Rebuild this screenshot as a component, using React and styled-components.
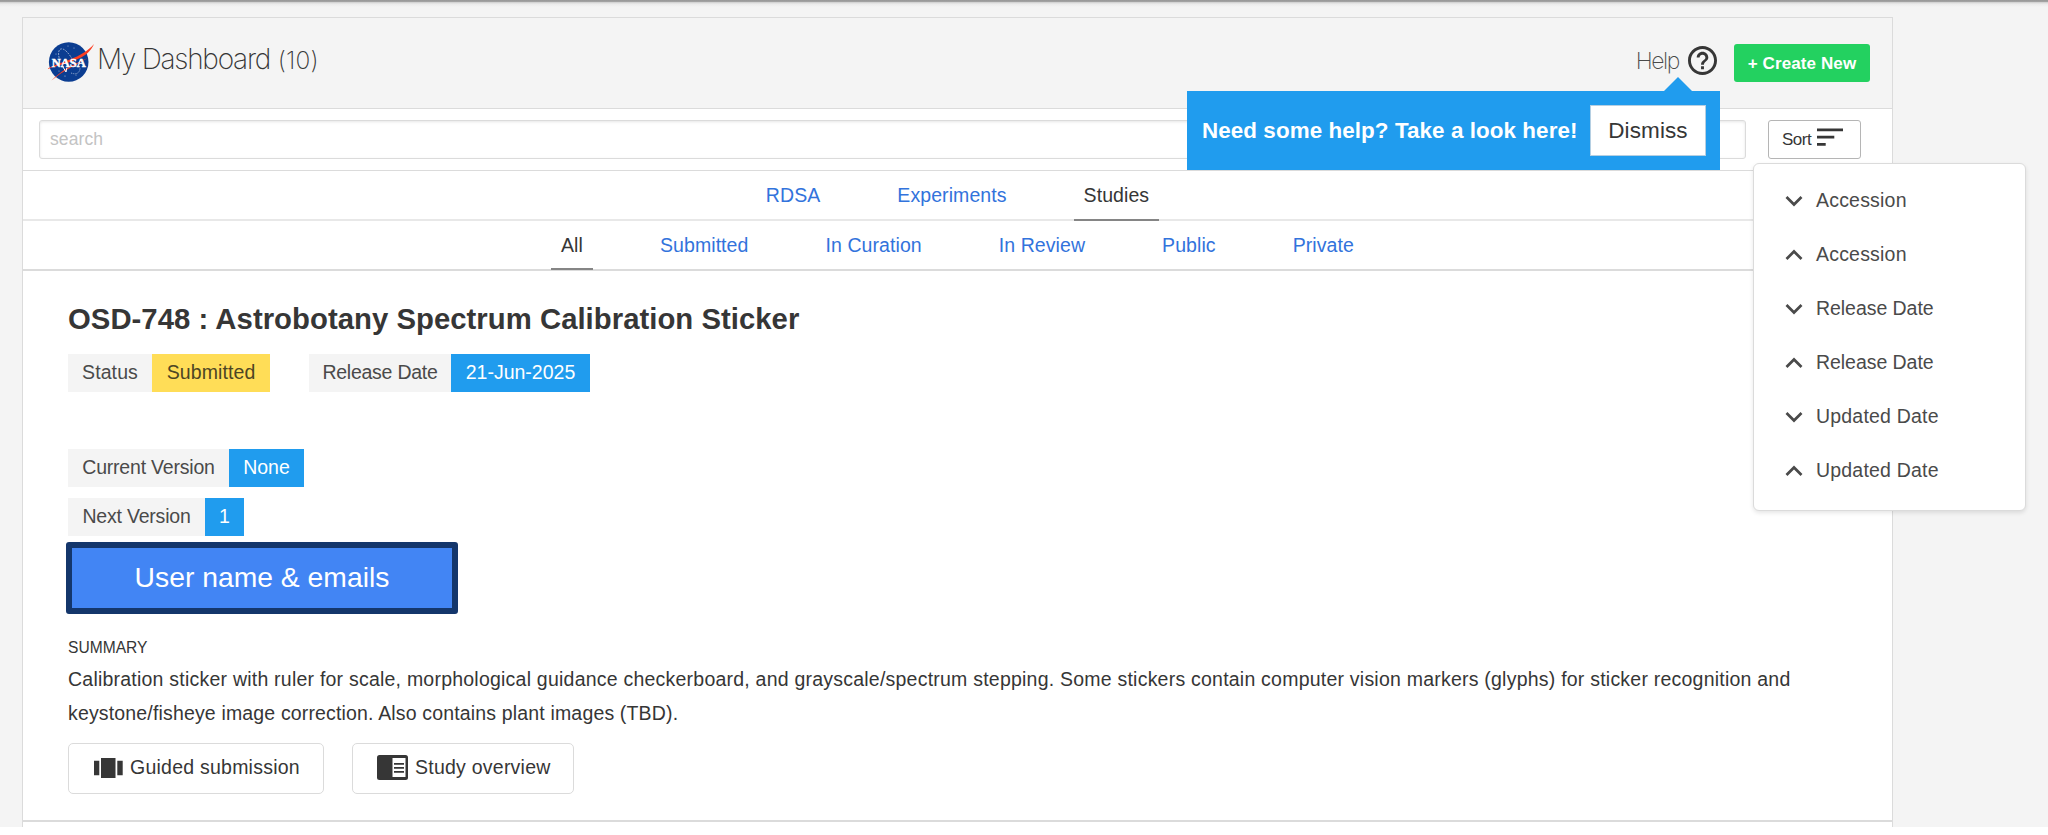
import React from "react";
import styled, { createGlobalStyle } from "styled-components";

const Global = createGlobalStyle`
  *, *::before, *::after { box-sizing: border-box; }
  html, body { margin: 0; padding: 0; background: #fff; }
  body {
    height: 835px;
    overflow: hidden;
    font-family: "Liberation Sans", Arial, sans-serif;
    font-size: 19.5px;
    color: #363636;
  }
  button, input { font-family: inherit; color: inherit; margin: 0; }
`;

const Page = styled.div`
  height: 827px;
  overflow: hidden;
  background: linear-gradient(#979797 0, #a2a2a2 1.5px, #d4d4d4 2.5px, #ebebeb 4px, #f4f4f4 7px);
  padding: 17px 0 0 22px;
`;

const Panel = styled.main`
  width: 1871px;
  height: 818px;
  border: 1px solid #dbdbdb;
  border-bottom: 0;
  background: #fff;
`;

const Header = styled.header`
  display: flex;
  align-items: flex-start;
  justify-content: space-between;
  height: 91px;
  padding: 23px 22px 0 24px;
  background: #f4f4f4;
  border-bottom: 1px solid #dbdbdb;
`;

const Brand = styled.div`
  display: flex;
  align-items: flex-start;
`;

const Title = styled.h1`
  margin: 0 0 0 2px;
  font-family: Inter, sans-serif;
  font-size: 28px;
  font-weight: 200;
  line-height: 36px;
  letter-spacing: -1.25px;
  color: #363636;
`;

const Count = styled.span`
  font-size: 24.5px;
  letter-spacing: 0.2px;
  margin-left: 1px;
`;

const HeaderActions = styled.div`
  display: flex;
  align-items: flex-start;
`;

const HelpLink = styled.a`
  position: relative;
  display: flex;
  align-items: flex-start;
  margin-right: 17px;
  font-family: Inter, sans-serif;
  font-size: 23px;
  font-weight: 200;
  line-height: 40px;
  letter-spacing: -1.4px;
  color: #4a4a4a;
  svg { display: block; margin: 5px 0 0 9px; }
`;

const CreateButton = styled.button`
  width: 136px;
  height: 38px;
  margin-top: 3px;
  padding: 1px 0 0;
  border: 0;
  border-radius: 3px;
  background: #23d160;
  color: #fff;
  font-size: 17px;
  font-weight: 700;
  line-height: 38px;
  letter-spacing: 0.1px;
`;

const HelpBubble = styled.div`
  position: absolute;
  z-index: 3;
  top: 50px;
  right: -3px;
  display: flex;
  align-items: center;
  justify-content: space-between;
  width: 533px;
  height: 79px;
  padding: 0 14px 0 15px;
  background: #209cee;
  color: #fff;
  font-family: "Liberation Sans", Arial, sans-serif;
  font-size: 22.4px;
  font-weight: 700;
  letter-spacing: 0.08px;
  line-height: 30px;
  white-space: nowrap;
  &::before {
    content: "";
    position: absolute;
    top: -14px;
    right: 28px;
    border: 14px solid transparent;
    border-top: 0;
    border-bottom-color: #209cee;
  }
`;

const DismissButton = styled.button`
  width: 116px;
  height: 51px;
  padding: 0;
  border: 1px solid #b5cfe2;
  background: #fff;
  color: #363636;
  font-size: 22.5px;
  line-height: 48px;
  letter-spacing: 0.1px;
`;

const SearchRow = styled.div`
  display: flex;
  justify-content: space-between;
  height: 62px;
  padding: 11px 31px 0 16px;
  border-bottom: 1px solid #dbdbdb;
`;

const SearchInput = styled.input`
  width: 1707px;
  height: 39px;
  padding: 0 10px;
  border: 1.5px solid #dbdbdb;
  border-radius: 3px;
  background: #fff;
  box-shadow: inset 0 1px 3px rgba(10, 10, 10, 0.1);
  font-size: 17.5px;
  letter-spacing: 0.1px;
  outline: 0;
  &::placeholder { color: #c3c3c3; opacity: 1; }
`;

const SortButton = styled.button`
  display: flex;
  align-items: flex-start;
  width: 93px;
  height: 39px;
  padding: 0 0 0 13px;
  border: 1px solid #b5b5b5;
  border-radius: 3px;
  background: #fff;
  font-size: 17px;
  line-height: 37px;
  letter-spacing: -0.5px;
  svg { display: block; margin: 7px 0 0 6px; }
`;

const SortArea = styled.div`
  position: relative;
`;

const SortMenu = styled.div`
  position: absolute;
  z-index: 2;
  top: 43px;
  left: -15px;
  width: 273px;
  height: 348px;
  padding: 10px 0;
  border: 1px solid #dbdbdb;
  border-radius: 6px;
  background: #fff;
  box-shadow: 0 2px 4px rgba(10, 10, 10, 0.1);
`;

const SortItem = styled.div`
  display: flex;
  align-items: center;
  height: 53.9px;
  padding-left: 31px;
  letter-spacing: ${(p) => p.$track}px;
  color: #4a4a4a;
  svg { display: block; margin: 1px 13px 0 0; }
`;

const Tabs = styled.nav`
  display: flex;
  justify-content: center;
  gap: 57px;
  height: ${(p) => p.$height}px;
  border-bottom: 2px solid ${(p) => p.$line};
`;

const Tab = styled.a`
  height: ${(p) => p.$height}px;
  padding: 0 10px;
  border-bottom: 2px solid ${(p) => (p.$active ? "#858585" : "transparent")};
  color: ${(p) => (p.$active ? "#363636" : "#3273dc")};
  line-height: 48px;
  letter-spacing: 0.08px;
`;

const Study = styled.article`
  height: 551px;
  padding: 28px 45px 0;
  border-bottom: 2px solid #dbdbdb;
`;

const StudyTitle = styled.h2`
  margin: 0 0 15px;
  font-size: 29.3px;
  font-weight: 700;
  line-height: 40px;
  letter-spacing: 0.03px;
  color: #363636;
`;

const TagRow = styled.div`
  display: flex;
  gap: 39px;
  margin-bottom: ${(p) => p.$after}px;
`;

const Tag = styled.div`
  display: flex;
  height: 38px;
  line-height: 37px;
`;

const tones = {
  plain: ["#f4f4f4", "#4a4a4a"],
  warning: ["#ffdd57", "#4d4524"],
  info: ["#209cee", "#ffffff"],
};

const TagPart = styled.span`
  width: ${(p) => p.$width}px;
  text-align: center;
  letter-spacing: ${(p) => p.$track || 0}px;
  background: ${(p) => tones[p.$tone][0]};
  color: ${(p) => tones[p.$tone][1]};
  white-space: nowrap;
`;

const UserBox = styled.div`
  width: 392px;
  height: 72px;
  margin: 0 0 22px -2px;
  border: 6px solid #14366b;
  border-radius: 3px;
  background: #4285f4;
  color: #fff;
  font-size: 28.3px;
  line-height: 59px;
  text-align: center;
`;

const SummaryLabel = styled.div`
  margin-bottom: 3px;
  font-size: 15.6px;
  line-height: 24px;
`;

const Summary = styled.p`
  margin: 0 0 12.5px;
  line-height: 33.5px;
  white-space: nowrap;
`;

const SummaryLine = styled.span`
  display: block;
  letter-spacing: ${(p) => p.$track}px;
`;

const StudyActions = styled.div`
  display: flex;
  gap: 28px;
`;

const ActionButton = styled.button`
  display: flex;
  align-items: center;
  width: ${(p) => p.$width}px;
  height: 51px;
  padding: 0 0 1px ${(p) => p.$inset}px;
  border: 1px solid #dbdbdb;
  border-radius: 5px;
  background: #fff;
  font-size: 19.5px;
  letter-spacing: 0.24px;
  white-space: nowrap;
  svg { display: block; margin-right: 7px; }
`;

const Logo = () => (
  <svg width="48" height="42" viewBox="0 0 48 42">
    <circle cx="21.7" cy="21" r="19.8" fill="#0b3d91" />
    <g fill="none" stroke="#fff" strokeWidth="0.7" opacity="0.75">
      <path d="M13 20C10 11 12 7 16 8c5 2 11 12 13 18" strokeDasharray="2 1" />
      <path d="M24 32c5 2 9 0 9-5" strokeDasharray="1.2 1" />
    </g>
    <g fill="#fff" opacity="0.7">
      <circle cx="21" cy="5" r="0.5" /><circle cx="27" cy="7" r="0.5" />
      <circle cx="9" cy="13" r="0.5" /><circle cx="12" cy="30" r="0.5" />
      <circle cx="18" cy="35" r="0.6" /><circle cx="29" cy="34" r="0.5" />
    </g>
    <path d="M0 28C14 20 34 18 47 3C41 17 27 20 0 28Z" fill="#fc3d21" />
    <path d="M4.500 39.500C14 30 24 24 41 17C27 25 16 30 4.500 39.500Z" fill="#fc3d21" />
    <text x="4.800" y="25.600" textLength="34" lengthAdjust="spacingAndGlyphs" fill="#fff" stroke="#fff" strokeWidth="0.4" fontFamily="Liberation Serif" fontWeight="700" fontSize="11.500">NASA</text>
    <path d="M16 26l3 5 .8-4" fill="none" stroke="#fff" strokeWidth="1" />
  </svg>
);

const HelpIcon = () => (
  <svg width="29" height="29" viewBox="2 2 20 20" fill="#363636">
    <path d="M11 18h2v-2h-2v2zm1-16C6.480 2 2 6.480 2 12s4.480 10 10 10 10-4.480 10-10S17.520 2 12 2zm0 18c-4.410 0-8-3.590-8-8s3.590-8 8-8 8 3.590 8 8-3.590 8-8 8zm0-14c-2.210 0-4 1.790-4 4h2c0-1.100.9-2 2-2s2 .9 2 2c0 2-3 1.750-3 5h2c0-2.250 3-2.500 3-5 0-2.210-1.790-4-4-4z" />
  </svg>
);

const SortIcon = () => (
  <svg width="26" height="18" viewBox="0 0 26 18" fill="#363636">
    <path d="M0 0.500h26v2.700H0zM0 7.700h17.300v2.700H0zM0 15h8.700v2.700H0z" />
  </svg>
);

const Chevron = ({ up }) => (
  <svg width="18" height="12" viewBox="0 0 18 12" fill="none" stroke="#4a4a4a" strokeWidth="2.700">
    <path d={up ? "M1.500 10L9 2.500L16.500 10" : "M1.500 2L9 9.500L16.500 2"} />
  </svg>
);

const CarouselIcon = () => (
  <svg width="29" height="20" viewBox="0 0 29 20" fill="#363636">
    <path d="M7 0h14.500v20H7zM0 2.800h5.300v14.400H0zM23.300 2.800h5.400v14.400h-5.400z" />
  </svg>
);

const ReaderIcon = () => (
  <svg width="31" height="25" viewBox="0 0 31 25">
    <rect width="31" height="25" rx="2.500" fill="#363636" />
    <path d="M15.500 3H28.500V22H15.500z" fill="#fff" />
    <path d="M17 8h10v1.700H17zM17 12h10v1.700H17zM17 16h10v1.700H17z" fill="#363636" />
  </svg>
);

const sortOptions = [
  { label: "Accession", track: 0.2 },
  { label: "Release Date", track: -0.05 },
  { label: "Updated Date", track: 0.2 },
].flatMap((option) => [
  { ...option, up: false },
  { ...option, up: true },
]);
const kinds = ["RDSA", "Experiments", "Studies"];
const stages = ["All", "Submitted", "In Curation", "In Review", "Public", "Private"];

export default function App() {
  return (
    <Page>
      <Global />
      <Panel>
        <Header>
          <Brand>
            <Logo />
            <Title>My Dashboard <Count>(10)</Count></Title>
          </Brand>
          <HeaderActions>
            <HelpLink>
              Help
              <HelpIcon />
              <HelpBubble>
                <span>Need some help? Take a look here!</span>
                <DismissButton>Dismiss</DismissButton>
              </HelpBubble>
            </HelpLink>
            <CreateButton>+ Create New</CreateButton>
          </HeaderActions>
        </Header>
        <SearchRow>
          <SearchInput placeholder="search" />
          <SortArea>
            <SortButton>Sort<SortIcon /></SortButton>
            <SortMenu>
              {sortOptions.map(({ label, up, track }) => (
                <SortItem key={label + up} $track={track}><Chevron up={up} />{label}</SortItem>
              ))}
            </SortMenu>
          </SortArea>
        </SearchRow>
        <Tabs $height={50} $line="#e8e8e8">
          {kinds.map((k) => <Tab key={k} $height={50} $active={k === "Studies"}>{k}</Tab>)}
        </Tabs>
        <Tabs $height={50} $line="#dbdbdb">
          {stages.map((s) => <Tab key={s} $height={49} $active={s === "All"}>{s}</Tab>)}
        </Tabs>
        <Study>
          <StudyTitle>OSD-748 : Astrobotany Spectrum Calibration Sticker</StudyTitle>
          <TagRow $after={57}>
            <Tag><TagPart $tone="plain" $width={84} $track={0.1}>Status</TagPart><TagPart $tone="warning" $width={118} $track={0.1}>Submitted</TagPart></Tag>
            <Tag><TagPart $tone="plain" $width={142} $track={-0.25}>Release Date</TagPart><TagPart $tone="info" $width={139}>21-Jun-2025</TagPart></Tag>
          </TagRow>
          <TagRow $after={11}>
            <Tag><TagPart $tone="plain" $width={161} $track={-0.2}>Current Version</TagPart><TagPart $tone="info" $width={75}>None</TagPart></Tag>
          </TagRow>
          <TagRow $after={6}>
            <Tag><TagPart $tone="plain" $width={137} $track={-0.2}>Next Version</TagPart><TagPart $tone="info" $width={39}>1</TagPart></Tag>
          </TagRow>
          <UserBox>User name &amp; emails</UserBox>
          <SummaryLabel>SUMMARY</SummaryLabel>
          <Summary>
            <SummaryLine $track={0.225}>Calibration sticker with ruler for scale, morphological guidance checkerboard, and grayscale/spectrum stepping. Some stickers contain computer vision markers (glyphs) for sticker recognition and</SummaryLine>
            <SummaryLine $track={0.16}>keystone/fisheye image correction. Also contains plant images (TBD).</SummaryLine>
          </Summary>
          <StudyActions>
            <ActionButton $width={256} $inset={25}><CarouselIcon />Guided submission</ActionButton>
            <ActionButton $width={222} $inset={24}><ReaderIcon />Study overview</ActionButton>
          </StudyActions>
        </Study>
      </Panel>
    </Page>
  );
}
